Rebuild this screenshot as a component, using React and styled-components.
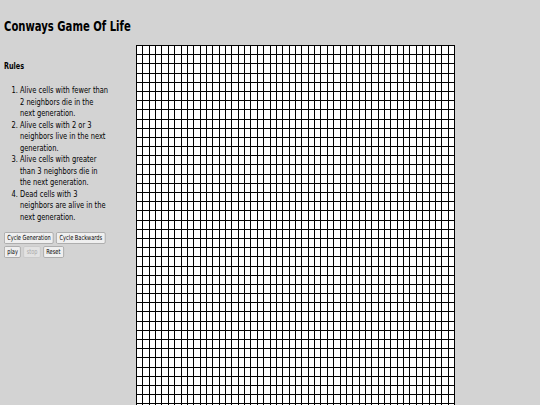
import React from 'react';
import styled, { createGlobalStyle } from 'styled-components';

const COLS = 50;
const ROWS = 50;
// the reference text is narrower than any installed face, so squeeze it
const SQUEEZE = 0.8;

const rules = [
  'Alive cells with fewer than 2 neighbors die in the next generation.',
  'Alive cells with 2 or 3 neighbors live in the next generation.',
  'Alive cells with greater than 3 neighbors die in the next generation.',
  'Dead cells with 3 neighbors are alive in the next generation.',
];

const App = () => (
  <>
    <GlobalStyle />
    <Page>
      <Title>Conways Game Of Life</Title>
      <Main>
        <Sidebar>
          <SidebarContent>
            <RulesHeading>Rules</RulesHeading>
            <RulesList>
              {rules.map((rule) => (
                <li key={rule}>{rule}</li>
              ))}
            </RulesList>
            <ButtonRow>
              <Button type="button">Cycle Generation</Button>
              <Button type="button">Cycle Backwards</Button>
            </ButtonRow>
            <ButtonRow>
              <Button type="button">play</Button>
              <Button type="button" disabled>
                stop
              </Button>
              <Button type="button">Reset</Button>
            </ButtonRow>
          </SidebarContent>
        </Sidebar>
        <Board>
          {[...Array(COLS * ROWS)].map((_, index) => (
            // eslint-disable-next-line react/no-array-index-key
            <Cell key={index} />
          ))}
        </Board>
      </Main>
    </Page>
  </>
);

export default App;

const GlobalStyle = createGlobalStyle`
  html, body {
    margin: 0;
    padding: 0;
    background-color: #d3d3d3;
    overflow: hidden;
  }
  body {
    font-family: "DejaVu Sans Condensed", "DejaVu Sans", sans-serif;
    color: #000;
  }
`;

const Page = styled.div`
  padding: 0 4px;
  height: 405px;
  overflow: hidden;
`;

const Title = styled.h1`
  margin: 18px 0 0;
  font-size: 14px;
  line-height: 16px;
  font-weight: bold;
  transform: scaleX(${SQUEEZE});
  transform-origin: left top;
`;

const Main = styled.div`
  display: flex;
  margin-top: 11px;
`;

const Sidebar = styled.div`
  width: 132px;
  flex-shrink: 0;
`;

const SidebarContent = styled.div`
  width: ${132 / SQUEEZE}px;
  transform: scaleX(${SQUEEZE});
  transform-origin: left top;
`;

const RulesHeading = styled.h3`
  margin: 16px 0 0;
  font-size: 9px;
  line-height: 11px;
  font-weight: bold;
`;

const RulesList = styled.ol`
  margin: 12px 0 0;
  padding-left: 20px;
  width: 112px;
  font-size: 9.3px;
  line-height: 11.5px;
`;

const ButtonRow = styled.div`
  display: flex;
  gap: 3px;
  margin-top: 2px;

  &:first-of-type {
    margin-top: 10px;
  }
`;

const Button = styled.button`
  height: 12px;
  padding: 0 3px;
  font-family: inherit;
  font-size: 7px;
  line-height: 10px;
  color: #000;
  background-color: #efefef;
  border: 1px solid #a8a8a8;
  border-radius: 2px;

  &:disabled {
    color: #a8a8a8;
    background-color: #e2e2e2;
    border-color: #c8c8c8;
  }
`;

const Board = styled.div`
  display: grid;
  grid-template-columns: repeat(${COLS}, 6.36px);
  grid-auto-rows: 9.2px;
  border-top: 1px solid #000;
  border-left: 1px solid #000;
  background-color: #fff;
  align-self: flex-start;
`;

const Cell = styled.div`
  border-right: 1px solid #000;
  border-bottom: 1px solid #000;
  box-sizing: border-box;
`;
